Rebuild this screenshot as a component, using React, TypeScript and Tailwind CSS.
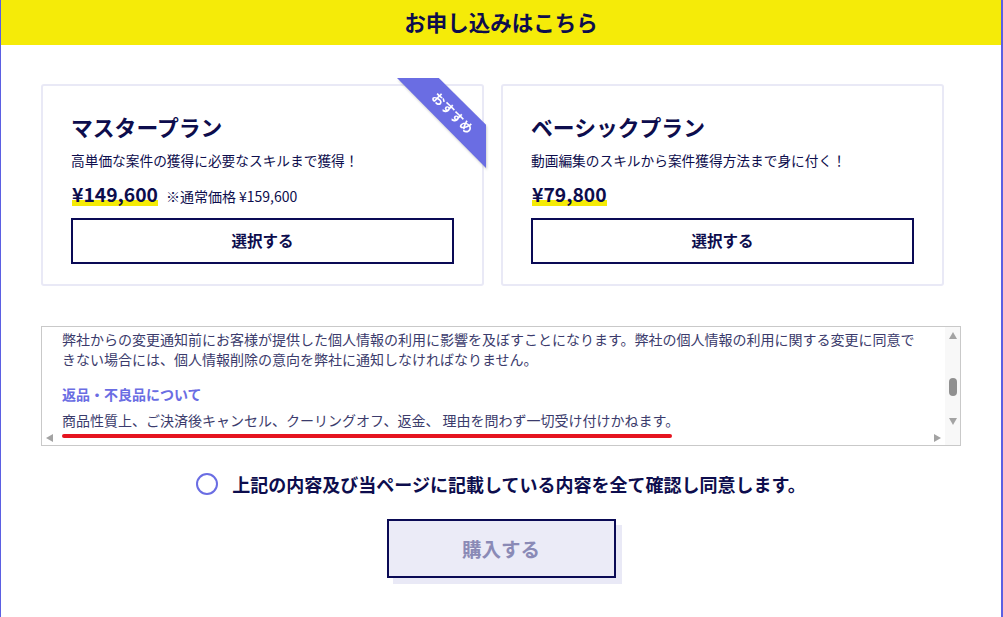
import React from "react";

const navy = "text-[#0d0d4d]";

const Price = ({ value }: { value: string }) => (
  <span className="text-[19.3px] font-bold leading-[29px] bg-[linear-gradient(transparent_69%,#f5eb05_69%,#f5eb05_90%,transparent_90%)]">
    {value}
  </span>
);

const PlanCard = ({
  title,
  lead,
  price,
  note,
  ribbon,
}: {
  title: string;
  lead: string;
  price: string;
  note?: string;
  ribbon?: boolean;
}) => (
  <div className="relative border-2 border-[#e9e9f6] rounded-[3px] bg-white px-[28px] pt-[26px] pb-[20px]">
    {ribbon && (
      // おすすめ ribbon over the corner
      <div className="absolute -top-[8px] -right-[4px] w-[89px] h-[90px] drop-shadow-[1px_2px_1px_rgba(0,0,0,0.18)]">
        <div className="w-full h-full bg-[#6a6de3] [clip-path:polygon(0_0,47%_0,100%_52%,100%_100%)] flex items-start justify-end">
          <span className="mt-[28px] mr-[7px] rotate-45 text-white text-[13px] font-bold leading-none whitespace-nowrap">
            おすすめ
          </span>
        </div>
      </div>
    )}
    <h3 className={`text-[21.8px] font-bold leading-[30px] ${navy}`}>{title}</h3>
    <p className={`mt-[8px] text-[13.7px] leading-[20px] ${navy}`}>{lead}</p>
    <div className={`mt-[10px] h-[28px] flex items-baseline gap-[8px] pl-[1px] ${navy}`}>
      <Price value={price} />
      {note && <span className="text-[14px]">{note}</span>}
    </div>
    <button
      className={`mt-[10px] w-full h-[46px] border-2 border-[#0a0a55] bg-white text-[15.5px] font-bold ${navy}`}
    >
      選択する
    </button>
  </div>
);

const Tri = ({ dir }: { dir: "up" | "down" | "left" | "right" }) => {
  const pts = {
    up: "0,7 4,0 8,7",
    down: "0,0 8,0 4,7",
    left: "7,0 7,8 0,4",
    right: "0,0 7,4 0,8",
  }[dir];
  const w = dir === "up" || dir === "down" ? 8 : 7;
  const h = dir === "up" || dir === "down" ? 7 : 8;
  return (
    <svg width={w} height={h} viewBox={`0 0 ${w} ${h}`} className="shrink-0">
      <polygon points={pts} fill="#a3a3a3" />
    </svg>
  );
};

const TermsBox = () => (
  <div className="h-[120px] border border-[#c9c9c9] bg-white grid grid-cols-[1fr_15px] overflow-hidden">
    <div className="relative overflow-hidden">
      <div className="pl-[20px] pt-[2px] text-[14px] text-[#3b3b6c] whitespace-nowrap">
        <p className="leading-[20px]">
          弊社からの変更通知前にお客様が提供した個人情報の利用に影響を及ぼすことになります。弊社の個人情報の利用に関する変更に同意で
        </p>
        <p className="leading-[20px]">きない場合には、個人情報削除の意向を弊社に通知しなければなりません。</p>
        <p className="mt-[15px] leading-[20px] font-bold text-[#6a6de3]">返品・不良品について</p>
        <p className="mt-[6px] leading-[20px]">
          商品性質上、ご決済後キャンセル、クーリングオフ、返金、 理由を問わず一切受け付けかねます。
        </p>
        <div className="mt-[4px] w-[610px] h-[4px] rounded-full bg-[#e5141f]" />
      </div>
      {/* horizontal scrollbar, overlaid on the content */}
      <div className="absolute inset-x-0 bottom-0 h-[15px] flex items-center justify-between px-[4px] pt-[1px]">
        <Tri dir="left" />
        <Tri dir="right" />
      </div>
    </div>
    {/* vertical scrollbar */}
    <div className="bg-[#f8f8f8] flex flex-col items-center pt-[5px]">
      <Tri dir="up" />
      <div className="mt-[39px] w-[8px] h-[18px] rounded-full bg-[#909090]" />
      <div className="mt-[22px]">
        <Tri dir="down" />
      </div>
    </div>
  </div>
);

export default function App() {
  return (
    <div className="min-h-screen w-[1003px] bg-white border-l border-r-2 border-[#5b5fe3] font-['Noto_Sans_CJK_JP','Noto_Sans',sans-serif]">
      <header className="h-[45px] bg-[#f5eb08] flex items-center justify-center">
        <h2 className={`text-[21.5px] font-bold ${navy}`}>お申し込みはこちら</h2>
      </header>

      <main className="pl-[40px] pr-[40px] pt-[39px]">
        <div className="grid grid-cols-[443px_443px] gap-[17px]">
          <PlanCard
            ribbon
            title="マスタープラン"
            lead="高単価な案件の獲得に必要なスキルまで獲得！"
            price="¥149,600"
            note="※通常価格 ¥159,600"
          />
          <PlanCard
            title="ベーシックプラン"
            lead="動画編集のスキルから案件獲得方法まで身に付く！"
            price="¥79,800"
          />
        </div>

        <div className="mt-[40px]">
          <TermsBox />
        </div>

        <label className="mt-[26px] flex items-center justify-center gap-[14px] cursor-pointer">
          <span className="w-[22px] h-[22px] rounded-full border-2 border-[#6a6de3] bg-white" />
          <span className={`text-[18px] font-bold leading-[24px] ${navy}`}>
            上記の内容及び当ページに記載している内容を全て確認し同意します。
          </span>
        </label>

        <div className="mt-[23px] flex justify-center">
          <button className="w-[229px] h-[59px] border-2 border-[#0a0a55] bg-[#ebebf7] shadow-[6px_6px_0_#e9e9f6] text-[19.5px] font-bold text-[#8a8ab6]">
            購入する
          </button>
        </div>
      </main>
    </div>
  );
}
